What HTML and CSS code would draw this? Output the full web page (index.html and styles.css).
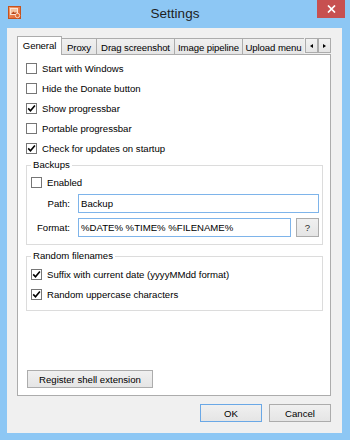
FILE: index.html
```html
<!DOCTYPE html>
<html>
<head>
<meta charset="utf-8">
<link rel="stylesheet" href="styles.css">
</head>
<body>
<div class="window">
  <div class="titlebar">
    <div class="tb-left">
      <svg class="appicon" width="13" height="13" viewBox="0 0 13 13">
        <defs>
          <linearGradient id="ig" x1="0" y1="0" x2="1" y2="1">
            <stop offset="0" stop-color="#f7a36e"/>
            <stop offset="1" stop-color="#d9582a"/>
          </linearGradient>
        </defs>
        <rect x="0.5" y="0.5" width="12" height="12" fill="url(#ig)" stroke="#c4521f"/>
        <rect x="2.5" y="2.5" width="7" height="6" fill="#f3c2a0" stroke="#fbe3d2" stroke-width="1"/>
        <path d="M3 8 L5.5 5.5 L7 7 L8 6 L9.5 8 Z" fill="#b8461b"/>
        <circle cx="9.5" cy="9.5" r="2.2" fill="#e06a30" stroke="#fff0e5" stroke-width="0.8"/>
      </svg>
    </div>
    <div class="title">Settings</div>
    <div class="tb-right">
      <div class="close">
        <svg width="9" height="8" viewBox="0 0 9 8"><path d="M1 0.5 L8 7.5 M8 0.5 L1 7.5" stroke="#fff" stroke-width="1.7"/></svg>
      </div>
    </div>
  </div>
  <div class="client">
    <div class="tabs">
      <div class="tab active t-general">General</div>
      <div class="tab t-proxy">Proxy</div>
      <div class="tab t-drag">Drag screenshot</div>
      <div class="tab t-image">Image pipeline</div>
      <div class="tab t-upload">Upload menu</div>
      <div class="arrows">
        <div class="arrow"><span class="tri-left"></span></div>
        <div class="arrow"><span class="tri-right"></span></div>
      </div>
    </div>
    <div class="panel">
      <div class="row"><span class="cb"></span><span>Start with Windows</span></div>
      <div class="row"><span class="cb"></span><span>Hide the Donate button</span></div>
      <div class="row"><span class="cb"><svg width="9" height="9" viewBox="0 0 9 9"><path d="M1.2 4.4 L3.5 6.8 L7.9 1.6" fill="none" stroke="#000" stroke-width="1.6"/></svg></span><span>Show progressbar</span></div>
      <div class="row"><span class="cb"></span><span>Portable progressbar</span></div>
      <div class="row"><span class="cb"><svg width="9" height="9" viewBox="0 0 9 9"><path d="M1.2 4.4 L3.5 6.8 L7.9 1.6" fill="none" stroke="#000" stroke-width="1.6"/></svg></span><span>Check for updates on startup</span></div>

      <fieldset class="group g-backups">
        <legend>Backups</legend>
        <div class="row r-enabled"><span class="cb"></span><span>Enabled</span></div>
        <div class="field f-path">
          <span class="lbl">Path:</span>
          <div class="tb">Backup</div>
        </div>
        <div class="field f-format">
          <span class="lbl">Format:</span>
          <div class="tb-wrap">
            <div class="tb">%DATE% %TIME% %FILENAME%</div>
            <div class="btn qbtn">?</div>
          </div>
        </div>
      </fieldset>

      <fieldset class="group g-random">
        <legend>Random filenames</legend>
        <div class="row r-first"><span class="cb"><svg width="9" height="9" viewBox="0 0 9 9"><path d="M1.2 4.4 L3.5 6.8 L7.9 1.6" fill="none" stroke="#000" stroke-width="1.6"/></svg></span><span>Suffix with current date (yyyyMMdd format)</span></div>
        <div class="row"><span class="cb"><svg width="9" height="9" viewBox="0 0 9 9"><path d="M1.2 4.4 L3.5 6.8 L7.9 1.6" fill="none" stroke="#000" stroke-width="1.6"/></svg></span><span>Random uppercase characters</span></div>
      </fieldset>

      <div class="btn register">Register shell extension</div>
    </div>
    <div class="footer">
      <div class="btn dlg default">OK</div>
      <div class="btn dlg">Cancel</div>
    </div>
  </div>
</div>
</body>
</html>
```
FILE: styles.css
```css
* { box-sizing: border-box; }

body {
  margin: 0;
  width: 350px;
  height: 440px;
  overflow: hidden;
  background: #8dc7f4;
  font-family: "Liberation Sans", Arial, sans-serif;
  font-size: 9.6px;
  color: #000;
}

.window {
  display: flex;
  flex-direction: column;
  height: 440px;
}

.titlebar {
  flex: none;
  height: 28px;
  display: grid;
  grid-template-columns: 1fr auto 1fr;
}

.tb-left {
  padding: 6px 0 0 8px;
}

.appicon { display: block; }

.title {
  font-size: 13.5px;
  line-height: 28px;
  color: #1e1e1e;
}

.tb-right {
  display: flex;
  justify-content: flex-end;
  align-items: flex-start;
  padding-right: 5px;
}

.close {
  width: 28px;
  height: 18px;
  background: #c75050;
  display: flex;
  align-items: center;
  justify-content: center;
}

.client {
  margin: 0 8px 0 7px;
  height: 405px;
  background: #f0f0f0;
  padding: 8px 11px 0 10px;
  display: flex;
  flex-direction: column;
}

/* tabs */
.tabs {
  height: 18px;
  display: flex;
  position: relative;
  z-index: 1;
}

.tab {
  height: 16px;
  margin-top: 2px;
  border-top: 1px solid #acacac;
  border-right: 1px solid #acacac;
  background: linear-gradient(#f0f0f0, #e5e5e5);
  display: flex;
  align-items: center;
  justify-content: center;
  white-space: nowrap;
  padding-top: 1px;
  letter-spacing: -0.1px;
}

.tab.active {
  height: 19px;
  margin-top: 0;
  border: 1px solid #acacac;
  border-bottom: none;
  background: #fff;
  padding-top: 0;
  padding-bottom: 1px;
}

.t-general { width: 45px; }
.t-proxy { width: 35px; }
.t-drag { width: 78px; }
.t-image { width: 68px; }
.t-upload { width: 61px; border-right: none; overflow: hidden; }

.arrows {
  display: flex;
  margin-left: 1px;
  margin-top: 2px;
}

.arrow {
  width: 13px;
  height: 15px;
  border: 1px solid #acacac;
  background: linear-gradient(#f2f2f2, #e5e5e5);
  display: flex;
  align-items: center;
  justify-content: center;
}

.tri-left {
  width: 0;
  height: 0;
  border-top: 2.5px solid transparent;
  border-bottom: 2.5px solid transparent;
  border-right: 3px solid #000;
}

.tri-right {
  width: 0;
  height: 0;
  border-top: 2.5px solid transparent;
  border-bottom: 2.5px solid transparent;
  border-left: 3px solid #000;
}

/* panel */
.panel {
  width: 314px;
  height: 342px;
  border: 1px solid #acacac;
  background: #fff;
  padding: 3px 7px 7px 8px;
  display: flex;
  flex-direction: column;
}

.row {
  height: 20px;
  display: flex;
  align-items: center;
  gap: 5px;
  white-space: nowrap;
}

.cb {
  flex: none;
  width: 11px;
  height: 11px;
  border: 1px solid #767676;
  background: #fff;
  display: flex;
  align-items: center;
  justify-content: center;
}

.cb svg { display: block; }

.group {
  margin: 1px 0 0;
  padding: 0 3px 7px 4px;
  border: 1px solid #dcdcdc;
  min-width: 0;
}

.group legend {
  padding: 0 2px;
  line-height: 12px;
}

.r-enabled { margin-top: 1px; }

.field {
  display: grid;
  grid-template-columns: 39px 1fr;
  column-gap: 8px;
  align-items: center;
  height: 19px;
}

.f-path { margin-top: 2px; }
.f-format { margin-top: 5px; }

.lbl { text-align: right; }

.tb {
  height: 19px;
  border: 1px solid #7eb4ea;
  background: #fff;
  padding-left: 2px;
  display: flex;
  align-items: center;
  white-space: nowrap;
}

.tb-wrap {
  display: flex;
  gap: 5px;
}

.tb-wrap .tb { flex: 1; }

.btn {
  border: 1px solid #acacac;
  background: linear-gradient(#f0f0f0, #e5e5e5);
  display: flex;
  align-items: center;
  justify-content: center;
  white-space: nowrap;
}

.qbtn {
  flex: none;
  width: 23px;
  height: 19px;
  color: #2a2a2a;
}

.g-random { margin-top: 5px; padding-bottom: 6px; }
.r-first { margin-top: 2px; }

.register {
  margin-top: auto;
  margin-left: 1px;
  width: 126px;
  height: 18px;
}

.footer {
  display: flex;
  justify-content: flex-end;
  gap: 7px;
  margin-top: 8px;
}

.dlg {
  width: 62px;
  height: 18px;
}

.dlg.default {
  border-color: #6aa8e6;
}
```
